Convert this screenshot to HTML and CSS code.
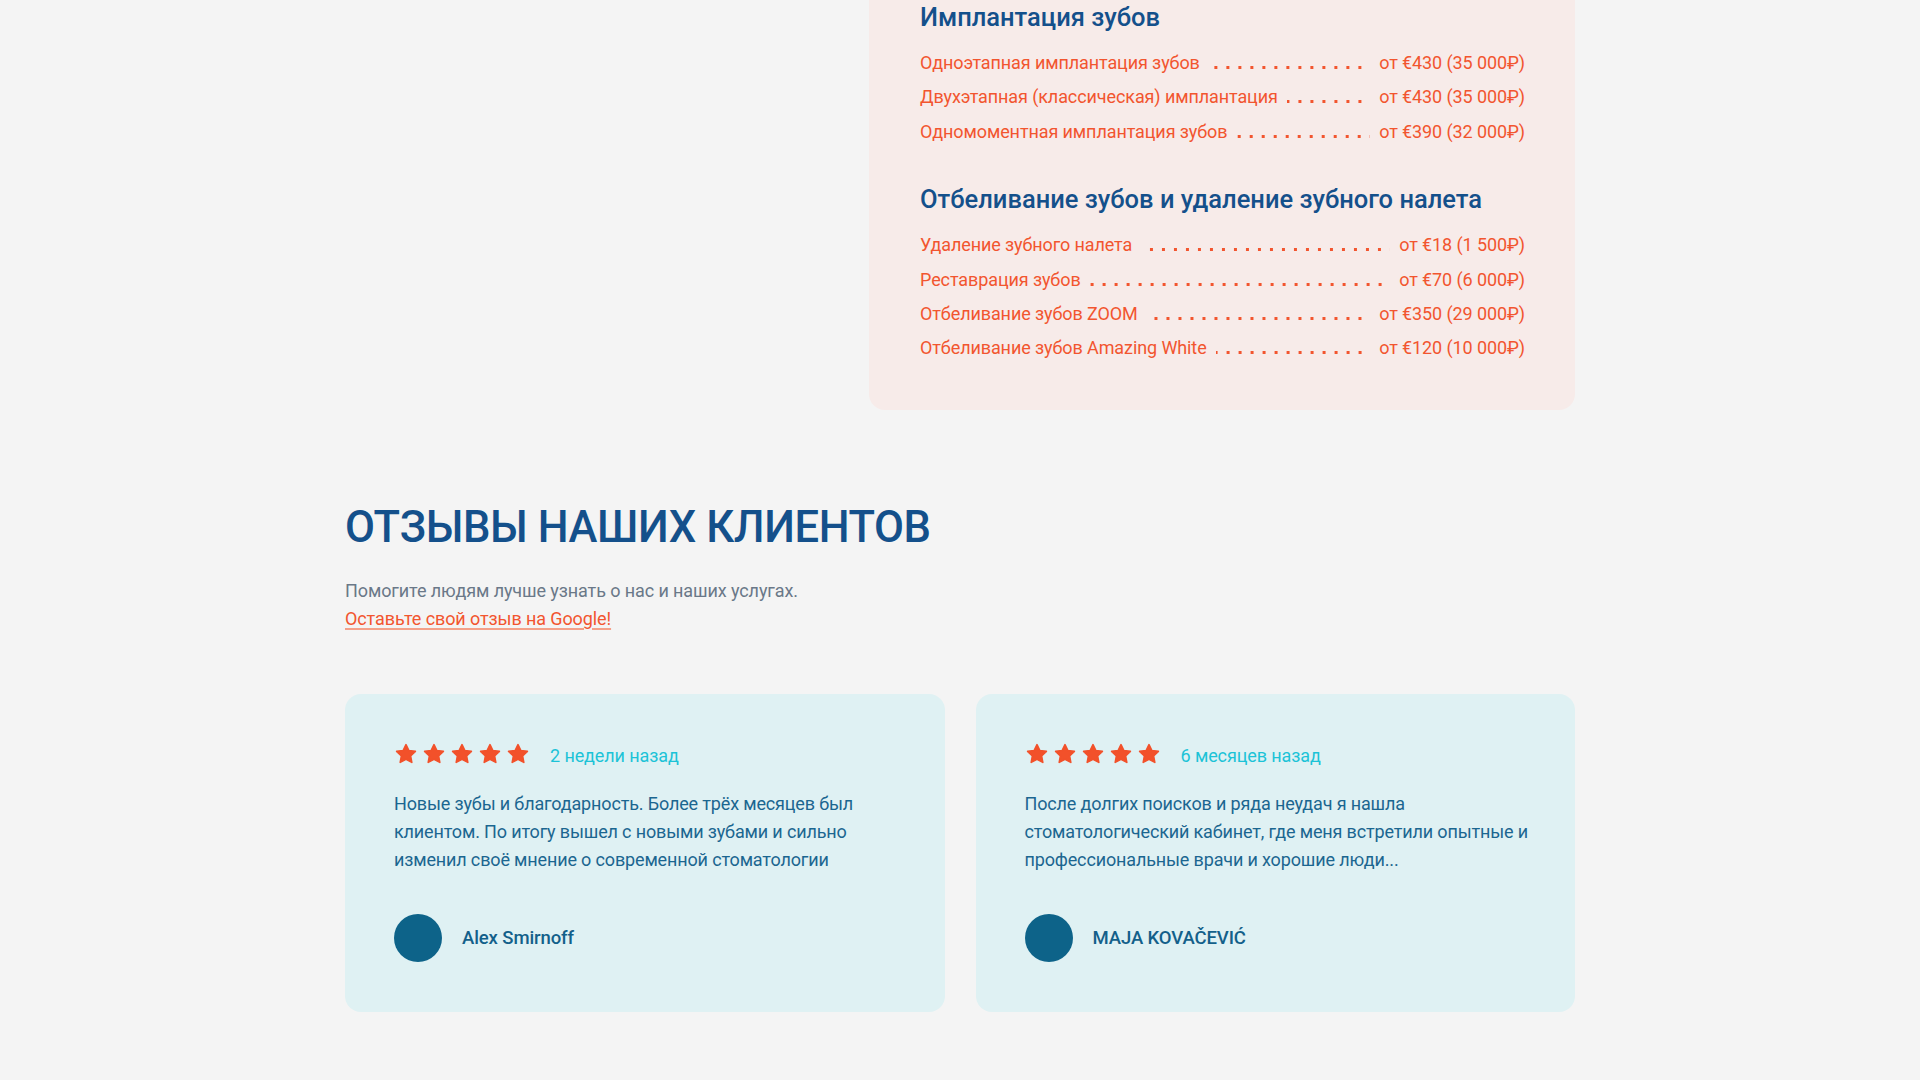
FILE: index.html
```html
<!DOCTYPE html>
<html lang="ru">
<head>
<meta charset="utf-8">
<title>Цены и отзывы</title>
<link rel="stylesheet" href="styles.css">
</head>
<body>
<div class="page">
  <section class="prices">
    <div class="prices-spacer"></div>
    <div class="price-card">
      <h3 class="price-title">Имплантация зубов</h3>
      <ul class="price-list">
        <li class="price-row"><span class="price-name">Одноэтапная имплантация зубов</span><span class="leader"></span><span class="price-val">от €430 (35 000₽)</span></li>
        <li class="price-row"><span class="price-name">Двухэтапная (классическая) имплантация</span><span class="leader"></span><span class="price-val">от €430 (35 000₽)</span></li>
        <li class="price-row"><span class="price-name">Одномоментная имплантация зубов</span><span class="leader"></span><span class="price-val">от €390 (32 000₽)</span></li>
      </ul>
      <h3 class="price-title second">Отбеливание зубов и удаление зубного налета</h3>
      <ul class="price-list">
        <li class="price-row"><span class="price-name">Удаление зубного налета</span><span class="leader"></span><span class="price-val">от €18 (1 500₽)</span></li>
        <li class="price-row"><span class="price-name">Реставрация зубов</span><span class="leader"></span><span class="price-val">от €70 (6 000₽)</span></li>
        <li class="price-row"><span class="price-name">Отбеливание зубов ZOOM</span><span class="leader"></span><span class="price-val">от €350 (29 000₽)</span></li>
        <li class="price-row"><span class="price-name">Отбеливание зубов Amazing White</span><span class="leader"></span><span class="price-val">от €120 (10 000₽)</span></li>
      </ul>
    </div>
  </section>

  <section class="reviews">
    <h2 class="reviews-title">ОТЗЫВЫ НАШИХ КЛИЕНТОВ</h2>
    <p class="reviews-sub">Помогите людям лучше узнать о нас и наших услугах.<br><a class="reviews-link" href="#">Оставьте свой отзыв на Google!</a></p>

    <div class="review-grid">
      <article class="review-card">
        <div class="review-head">
          <div class="stars">
            <svg class="star" viewBox="0 0 24 24"><path d="M12 2.6l2.9 6 6.5.8-4.8 4.5 1.2 6.5L12 17.2l-5.8 3.2 1.2-6.5L2.6 9.4l6.5-.8z"/></svg>
            <svg class="star" viewBox="0 0 24 24"><path d="M12 2.6l2.9 6 6.5.8-4.8 4.5 1.2 6.5L12 17.2l-5.8 3.2 1.2-6.5L2.6 9.4l6.5-.8z"/></svg>
            <svg class="star" viewBox="0 0 24 24"><path d="M12 2.6l2.9 6 6.5.8-4.8 4.5 1.2 6.5L12 17.2l-5.8 3.2 1.2-6.5L2.6 9.4l6.5-.8z"/></svg>
            <svg class="star" viewBox="0 0 24 24"><path d="M12 2.6l2.9 6 6.5.8-4.8 4.5 1.2 6.5L12 17.2l-5.8 3.2 1.2-6.5L2.6 9.4l6.5-.8z"/></svg>
            <svg class="star" viewBox="0 0 24 24"><path d="M12 2.6l2.9 6 6.5.8-4.8 4.5 1.2 6.5L12 17.2l-5.8 3.2 1.2-6.5L2.6 9.4l6.5-.8z"/></svg>
          </div>
          <span class="review-date">2 недели назад</span>
        </div>
        <p class="review-text">Новые зубы и благодарность. Более трёх месяцев был клиентом. По итогу вышел с новыми зубами и сильно изменил своё мнение о современной стоматологии</p>
        <div class="review-author">
          <span class="avatar"></span>
          <span class="author-name">Alex Smirnoff</span>
        </div>
      </article>

      <article class="review-card">
        <div class="review-head">
          <div class="stars">
            <svg class="star" viewBox="0 0 24 24"><path d="M12 2.6l2.9 6 6.5.8-4.8 4.5 1.2 6.5L12 17.2l-5.8 3.2 1.2-6.5L2.6 9.4l6.5-.8z"/></svg>
            <svg class="star" viewBox="0 0 24 24"><path d="M12 2.6l2.9 6 6.5.8-4.8 4.5 1.2 6.5L12 17.2l-5.8 3.2 1.2-6.5L2.6 9.4l6.5-.8z"/></svg>
            <svg class="star" viewBox="0 0 24 24"><path d="M12 2.6l2.9 6 6.5.8-4.8 4.5 1.2 6.5L12 17.2l-5.8 3.2 1.2-6.5L2.6 9.4l6.5-.8z"/></svg>
            <svg class="star" viewBox="0 0 24 24"><path d="M12 2.6l2.9 6 6.5.8-4.8 4.5 1.2 6.5L12 17.2l-5.8 3.2 1.2-6.5L2.6 9.4l6.5-.8z"/></svg>
            <svg class="star" viewBox="0 0 24 24"><path d="M12 2.6l2.9 6 6.5.8-4.8 4.5 1.2 6.5L12 17.2l-5.8 3.2 1.2-6.5L2.6 9.4l6.5-.8z"/></svg>
          </div>
          <span class="review-date">6 месяцев назад</span>
        </div>
        <p class="review-text">После долгих поисков и ряда неудач я нашла стоматологический кабинет, где меня встретили опытные и профессиональные врачи и хорошие люди...</p>
        <div class="review-author">
          <span class="avatar"></span>
          <span class="author-name">MAJA KOVAČEVIĆ</span>
        </div>
      </article>
    </div>
  </section>
</div>
</body>
</html>
```

FILE: styles.css
```css
* { box-sizing: border-box; }

html, body {
  margin: 0;
  padding: 0;
  background: #f4f4f4;
}

body {
  font-family: "Roboto", "Noto Sans", sans-serif;
  color: #1b6690;
}

.page {
  width: 1230px;
  margin: 0 auto;
}

/* ---------- prices ---------- */
.prices {
  display: grid;
  grid-template-columns: 1fr 706px;
}

.price-card {
  background: #f7ebe9;
  border-radius: 0 0 16px 16px;
  padding: 2px 50px 44px 51px;
}

.price-title {
  margin: 0;
  font-size: 25.5px;
  line-height: 30px;
  font-weight: 500;
  color: #14508b;
  letter-spacing: 0;
}

.price-title.second {
  margin-top: 35px;
}

.price-list {
  list-style: none;
  margin: 14px 0 0;
  padding: 0;
}

.price-title.second + .price-list {
  margin-top: 14px;
}

.price-row {
  display: flex;
  align-items: baseline;
  font-size: 18px;
  line-height: 34.4px;
  color: #f2552f;
  letter-spacing: -0.1px;
}

.price-name,
.price-val {
  white-space: nowrap;
}

.leader {
  flex: 1;
  height: 3px;
  margin: 0 9px 0 9px;
  background-image: linear-gradient(to right, #f2552f 3px, transparent 3px);
  background-size: 12px 3px;
  background-repeat: repeat-x;
  background-position: right bottom;
}

/* ---------- reviews ---------- */
.reviews {
  padding-top: 91px;
  padding-bottom: 66px;
}

.reviews-title {
  margin: 0;
  font-size: 43.5px;
  line-height: 53px;
  font-weight: 500;
  color: #14508b;
  letter-spacing: -0.4px;
}

.reviews-sub {
  margin: 23px 0 0;
  font-size: 18px;
  line-height: 28px;
  color: #6a7888;
  letter-spacing: -0.1px;
}

.reviews-link {
  color: #f2552f;
  text-decoration: underline;
  text-decoration-color: #f4a089;
  text-decoration-thickness: 2px;
  text-underline-offset: 3px;
}

.review-grid {
  margin-top: 61px;
  display: grid;
  grid-template-columns: 1fr 1fr;
  gap: 31px;
}

.review-card {
  background: #dff1f3;
  border-radius: 16px;
  height: 318px;
  padding: 48px 40px 49px 49px;
}

.review-head {
  display: flex;
  align-items: center;
  height: 24px;
}

.stars {
  display: flex;
  gap: 4px;
}

.star {
  width: 24px;
  height: 24px;
  fill: #f2512a;
  stroke: #f2512a;
  stroke-width: 1.6;
  stroke-linejoin: round;
  display: block;
}

.review-date {
  margin-left: 20px;
  font-size: 18px;
  color: #1cc3d7;
  letter-spacing: -0.1px;
  position: relative;
  top: 2px;
}

.review-text {
  margin: 24px 0 0;
  font-size: 18px;
  line-height: 28px;
  color: #1b6690;
  letter-spacing: -0.15px;
}

.review-author {
  margin-top: 40px;
  display: flex;
  align-items: center;
  gap: 20px;
}

.avatar {
  width: 48px;
  height: 48px;
  border-radius: 50%;
  background: #0d6389;
  flex: none;
}

.author-name {
  font-size: 18.5px;
  font-weight: 500;
  color: #13608a;
  letter-spacing: -0.1px;
}
```
